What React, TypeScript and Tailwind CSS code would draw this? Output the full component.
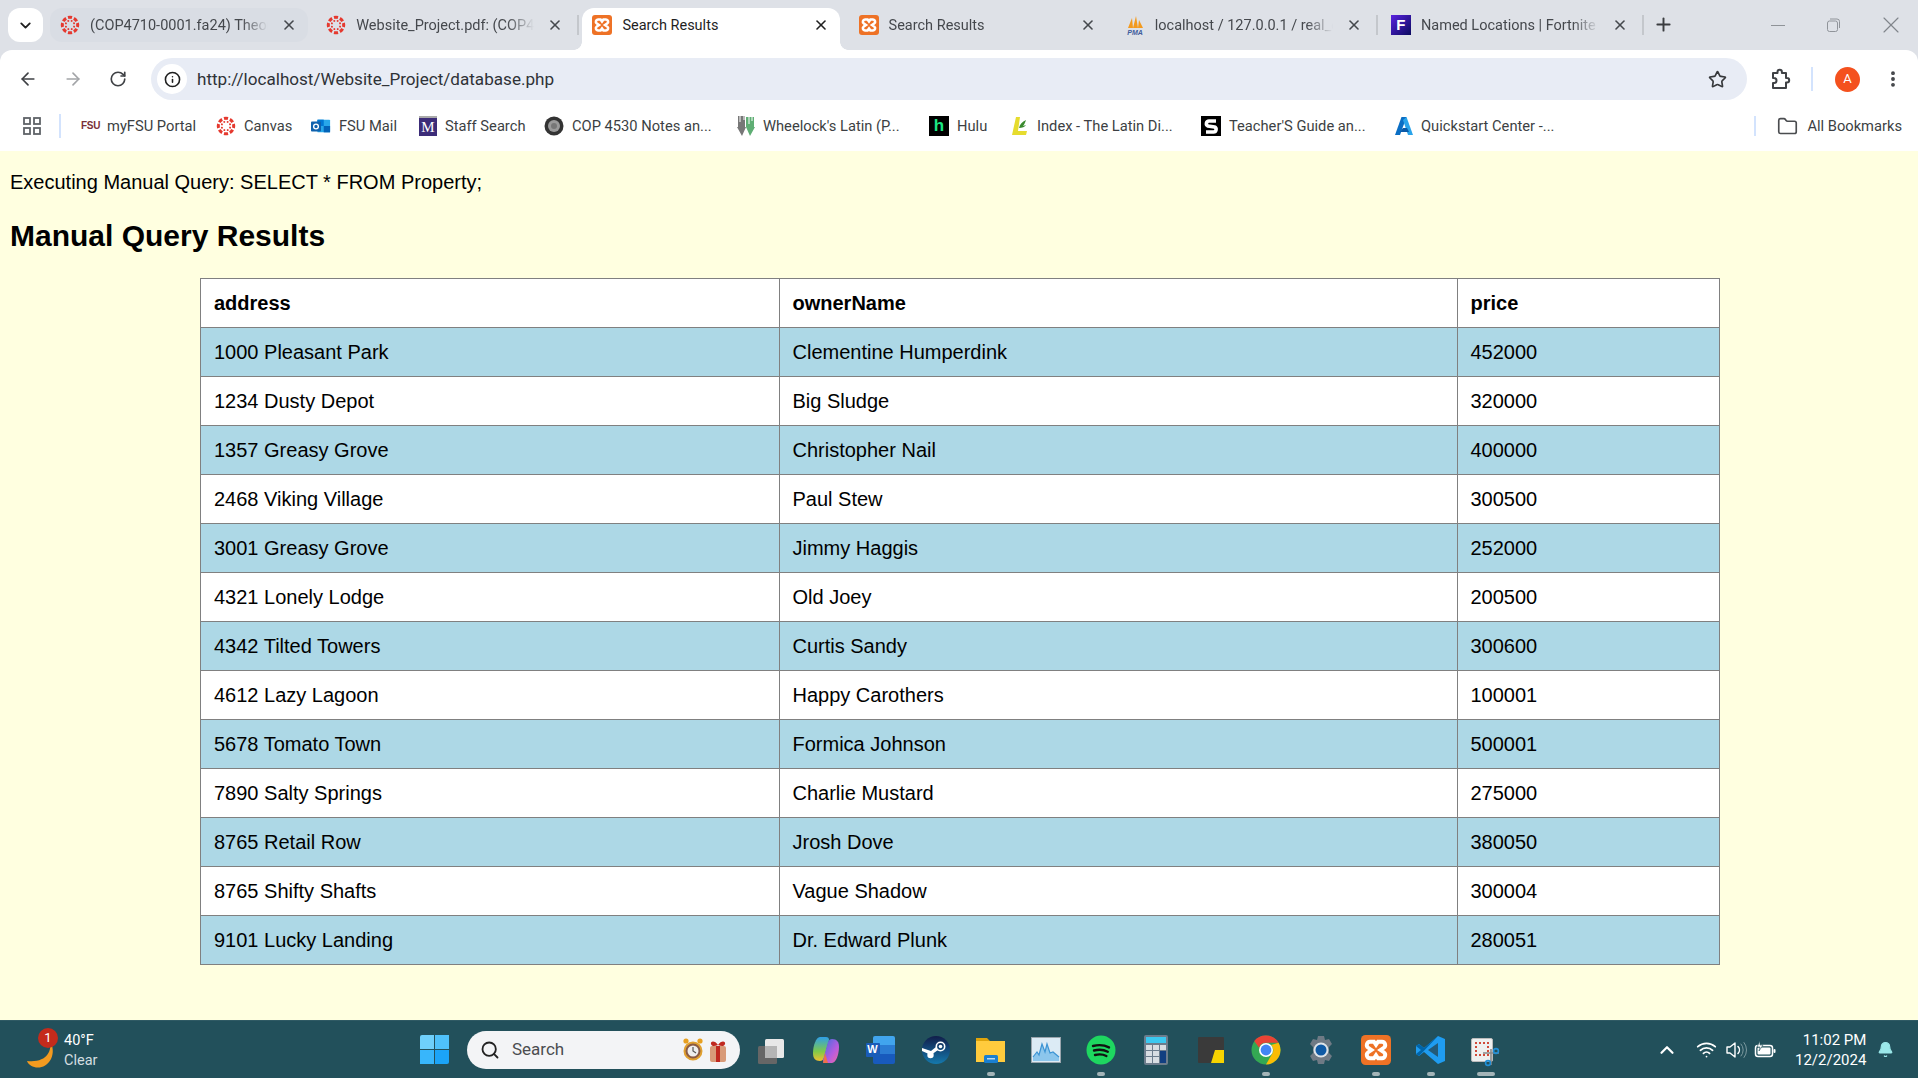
import React from "react";
import {
  ArrowLeft,
  ArrowRight,
  Bell,
  ChevronDown,
  ChevronUp,
  Folder,
  Info,
  MoreVertical,
  Plus,
  RotateCw,
  Search,
  Star,
  Wifi,
  X,
} from "lucide-react";

function CanvasIcon() {
  const big = [0, 45, 90, 135, 180, 225, 270, 315];
  return (
    <svg width="20" height="20" viewBox="0 0 20 20" className="shrink-0">
      {big.map((a) => (
        <g key={a} transform={`rotate(${a} 10 10)`}>
          <path d="M7.6 1.1a9.2 9.2 0 0 1 4.8 0L11.6 4a6.2 6.2 0 0 0-3.2 0z" fill="#e5392f" />
          <circle cx="10" cy="5.6" r="1" fill="#e5392f" transform="rotate(22 10 10)" />
        </g>
      ))}
    </svg>
  );
}

function XamppIcon({ size = 20 }: { size?: number }) {
  return (
    <svg width={size} height={size} viewBox="0 0 20 20" className="shrink-0">
      <rect width="20" height="20" rx="3" fill="#ee7226" />
      <path
        d="M6 4.5h2.6L10 6.5l1.4-2H14a2.2 2.2 0 0 1 1.2 4L13 10l2.2 1.5a2.2 2.2 0 0 1-1.2 4h-2.6l-1.4-2-1.4 2H6a2.2 2.2 0 0 1-1.2-4L7 10 4.8 8.5a2.2 2.2 0 0 1 1.2-4z"
        fill="none"
        stroke="#fff"
        strokeWidth="2.6"
      />
    </svg>
  );
}

function PmaIcon() {
  return (
    <svg width="20" height="20" viewBox="0 0 20 20" className="shrink-0">
      <path d="M3 13 7 3l1 10zM8 13l3-12 2 12zM13 13l1-8 4 8z" fill="#f39a1f" />
      <text x="10" y="19.5" textAnchor="middle" fontSize="7" fontWeight="700" fontStyle="italic" fill="#3f5d9c" fontFamily="Liberation Sans">
        PMA
      </text>
    </svg>
  );
}

function FortniteIcon() {
  return (
    <div className="w-5 h-5 shrink-0 flex items-center justify-center bg-[linear-gradient(135deg,#5a22e0,#0a0a5e)] text-white text-[15px] font-black font-['Liberation_Sans',sans-serif]">
      F
    </div>
  );
}

function FsuIcon() {
  return (
    <div className="w-[18px] shrink-0 text-[10px] leading-none font-bold text-[#7a3038] font-['Liberation_Sans',sans-serif] tracking-[-0.3px]">
      FSU
    </div>
  );
}

function OutlookIcon() {
  return (
    <svg width="20" height="20" viewBox="0 0 22 20" className="shrink-0">
      <rect x="7" y="3" width="14" height="14" rx="1" fill="#28a8ea" />
      <rect x="7" y="3" width="7" height="7" fill="#0078d4" />
      <rect x="14" y="10" width="7" height="7" fill="#0364b8" />
      <rect x="0" y="5" width="11" height="11" rx="1" fill="#0f62ad" />
      <circle cx="5.5" cy="10.5" r="2.6" fill="none" stroke="#fff" strokeWidth="1.5" />
    </svg>
  );
}

function StaffIcon() {
  return (
    <div className="w-[18px] h-5 shrink-0 flex items-end justify-center bg-[#3c2c78] text-white text-[15px] leading-[17px] font-['Liberation_Serif',serif] border-t-2 border-t-[#aaa]">
      M
    </div>
  );
}

function CopIcon() {
  return (
    <svg width="20" height="20" viewBox="0 0 20 20" className="shrink-0">
      <circle cx="10" cy="10" r="9.5" fill="#333" />
      <circle cx="10" cy="10" r="6" fill="#9a9a9a" />
      <circle cx="10" cy="10" r="3" fill="#777" />
    </svg>
  );
}

function WheelockIcon() {
  return (
    <svg width="18" height="20" viewBox="0 0 18 20" className="shrink-0">
      <path d="M1 0h7v11h1l-4 9-5-9h1z" fill="#777" />
      <path d="M9 1h8v10h1l-5 9-4-9z" fill="#5fae74" />
      <path d="M3 0v6M7 0v4M12 1v7M15 1v4" stroke="#fff" strokeWidth="1" />
    </svg>
  );
}

function HuluIcon() {
  return (
    <div className="w-5 h-5 shrink-0 bg-black flex items-center justify-center text-[#1ce783] text-[17px] leading-none font-bold font-['Liberation_Sans',sans-serif]">
      h
    </div>
  );
}

function IndexIcon() {
  return (
    <svg width="18" height="20" viewBox="0 0 18 20" className="shrink-0">
      <path d="M5 1h4l-2 14h9l-1 4H1z" fill="#e6dc2e" />
      <path d="M8 12c1-4 3-6 7-8-1 3-2 5-3 6l3-1c-1 2-4 3-7 3z" fill="#3a8a2e" />
    </svg>
  );
}

function TeacherIcon() {
  return (
    <svg width="20" height="20" viewBox="0 0 20 20" className="shrink-0">
      <rect width="20" height="20" fill="#000" />
      <path d="M15 5H8a2.6 2.6 0 0 0-1 5l6.5 1a2.6 2.6 0 0 1-1 5H5" fill="none" stroke="#fff" strokeWidth="3.6" />
    </svg>
  );
}

function AzureIcon() {
  return (
    <svg width="18" height="20" viewBox="0 0 18 20" className="shrink-0">
      <path d="M6.5 1h5L5 19H0z" fill="#0a6ec4" />
      <path d="M11.5 1 18 19h-5L8 4z" fill="#2aa4ea" />
      <path d="M8 12h4l2 4H5z" fill="#0a5aa8" />
    </svg>
  );
}

const tabs = [
  { title: "(COP4710-0001.fa24) Theory of Databases", icon: <CanvasIcon />, bg: "bg-[#d9dde4]" },
  { title: "Website_Project.pdf: (COP4710-0001)", icon: <CanvasIcon />, sep: true },
  { title: "Search Results", icon: <XamppIcon />, active: true },
  { title: "Search Results", icon: <XamppIcon /> },
  { title: "localhost / 127.0.0.1 / real_estate", icon: <PmaIcon />, sep: true },
  { title: "Named Locations | Fortnite Wiki", icon: <FortniteIcon />, sep: true },
];

const bookmarks = [
  { name: "myFSU Portal", icon: <FsuIcon />, w: "w-[135px]" },
  { name: "Canvas", icon: <CanvasIcon />, w: "w-[95px]" },
  { name: "FSU Mail", icon: <OutlookIcon />, w: "w-[108px]" },
  { name: "Staff Search", icon: <StaffIcon />, w: "w-[125px]" },
  { name: "COP 4530 Notes an...", icon: <CopIcon />, w: "w-[193px]" },
  { name: "Wheelock's Latin (P...", icon: <WheelockIcon />, w: "w-[192px]" },
  { name: "Hulu", icon: <HuluIcon />, w: "w-[82px]" },
  { name: "Index - The Latin Di...", icon: <IndexIcon />, w: "w-[190px]" },
  { name: "Teacher'S Guide an...", icon: <TeacherIcon />, w: "w-[194px]" },
  { name: "Quickstart Center -...", icon: <AzureIcon />, w: "w-[170px]" },
];

const rows = [
  ["1000 Pleasant Park", "Clementine Humperdink", "452000"],
  ["1234 Dusty Depot", "Big Sludge", "320000"],
  ["1357 Greasy Grove", "Christopher Nail", "400000"],
  ["2468 Viking Village", "Paul Stew", "300500"],
  ["3001 Greasy Grove", "Jimmy Haggis", "252000"],
  ["4321 Lonely Lodge", "Old Joey", "200500"],
  ["4342 Tilted Towers", "Curtis Sandy", "300600"],
  ["4612 Lazy Lagoon", "Happy Carothers", "100001"],
  ["5678 Tomato Town", "Formica Johnson", "500001"],
  ["7890 Salty Springs", "Charlie Mustard", "275000"],
  ["8765 Retail Row", "Jrosh Dove", "380050"],
  ["8765 Shifty Shafts", "Vague Shadow", "300004"],
  ["9101 Lucky Landing", "Dr. Edward Plunk", "280051"],
];

const taskIcons: { icon: React.ReactNode; dot?: string }[] = [
  {
    icon: (
      <svg width="30" height="30" viewBox="0 0 30 30">
        <rect x="9" y="4" width="19" height="19" rx="1.5" fill="#e8e8e8" />
        <rect x="2" y="11" width="19" height="18" rx="1.5" fill="#666" />
        <rect x="9" y="11" width="12" height="12" fill="#b5b5b5" />
      </svg>
    ),
  },
  {
    icon: (
      <svg width="30" height="30" viewBox="0 0 30 30">
        <defs>
          <linearGradient id="cpA" x1="0" y1="0" x2="0" y2="1">
            <stop offset="0" stopColor="#2f9fe8" />
            <stop offset="0.6" stopColor="#7fc94a" />
            <stop offset="1" stopColor="#f0c030" />
          </linearGradient>
          <linearGradient id="cpB" x1="0" y1="0" x2="1" y2="1">
            <stop offset="0" stopColor="#3a6fe0" />
            <stop offset="0.6" stopColor="#b65ce0" />
            <stop offset="1" stopColor="#f06aa0" />
          </linearGradient>
        </defs>
        <path d="M9 2h6c2 0 3 1 3 3l-5 18c-1 2-2 3-4 3-5 0-7-3-7-8 0-7 3-16 7-16z" fill="url(#cpA)" />
        <path d="M21 28h-6c-2 0-3-1-3-3l5-18c1-2 2-3 4-3 5 0 7 3 7 8 0 7-3 16-7 16z" fill="url(#cpB)" />
        <path d="M14 18l3 10h-5z" fill="#f0704a" />
      </svg>
    ),
  },
  {
    icon: (
      <div className="relative w-[30px] h-7">
        <div className="absolute left-[7px] top-0 w-[22px] h-7 rounded-[2px] bg-[linear-gradient(#41a5ee_33%,#2b7cd3_33%,#2b7cd3_66%,#185abd_66%)]" />
        <div className="absolute left-0 top-[7px] w-[14px] h-[14px] bg-[#1a5cb8] rounded-[1px] flex items-center justify-center text-white text-[11px] font-bold font-['Liberation_Sans',sans-serif]">
          W
        </div>
      </div>
    ),
  },
  {
    icon: (
      <svg width="30" height="30" viewBox="0 0 30 30">
        <defs>
          <linearGradient id="stm" x1="0" y1="0" x2="0" y2="1">
            <stop offset="0" stopColor="#111d4a" />
            <stop offset="1" stopColor="#1579ad" />
          </linearGradient>
        </defs>
        <circle cx="15" cy="15" r="14" fill="url(#stm)" />
        <circle cx="19.5" cy="11.5" r="4.2" fill="none" stroke="#fff" strokeWidth="1.6" />
        <circle cx="19.5" cy="11.5" r="1.8" fill="#fff" />
        <path d="M1 16l9 4 7-5-2-3-5 4-9-3z" fill="#fff" />
        <circle cx="9.5" cy="20" r="3.2" fill="#fff" />
      </svg>
    ),
  },
  {
    icon: (
      <svg width="30" height="30" viewBox="0 0 30 30">
        <path d="M0 3h11l3 3h15v4H0z" fill="#dfa40b" />
        <path d="M0 6h29v21H0z" fill="#ffcb3d" />
        <rect x="8" y="20" width="14" height="8" rx="1.5" fill="#1a7fd0" />
        <rect x="11" y="23" width="8" height="1.5" fill="#fff" opacity="0.7" />
      </svg>
    ),
    dot: "w-2",
  },
  {
    icon: (
      <svg width="30" height="26" viewBox="0 0 30 26">
        <rect x="0.5" y="0.5" width="29" height="25" fill="#dcebf5" stroke="#9aa5ad" />
        <path d="M2 20l4-5 2 3 3-11 3 8 2-8 3 9 3-1 6 5v4H2z" fill="#8cc6ec" />
        <path d="M2 20l4-5 2 3 3-11 3 8 2-8 3 9 3-1 6 5" fill="none" stroke="#3c94d4" strokeWidth="1.2" />
      </svg>
    ),
  },
  {
    icon: (
      <svg width="30" height="30" viewBox="0 0 30 30">
        <circle cx="15" cy="15" r="14.5" fill="#1ed760" />
        <path d="M7 11c6-1.6 11-1.2 16 1.4M8 15.5c5-1.3 9.5-1 13.8 1.2M9 20c4-1 8-.8 11.4 1" fill="none" stroke="#111" strokeWidth="2.4" strokeLinecap="round" />
      </svg>
    ),
    dot: "w-2",
  },
  {
    icon: (
      <div className="w-6 h-[30px] rounded-[2px] bg-[#6c7c8c] p-[2px] flex flex-col gap-[2px]">
        <div className="h-[6px] bg-[#3bc8f0]" />
        <div className="grid grid-cols-3 gap-[1px] flex-1">
          <div className="bg-[#d8dde2]" />
          <div className="bg-[#d8dde2]" />
          <div className="bg-[#d8dde2]" />
          <div className="bg-[#d8dde2]" />
          <div className="bg-[#d8dde2]" />
          <div className="bg-[#123f80] row-span-2" />
          <div className="bg-[#d8dde2]" />
          <div className="bg-[#d8dde2]" />
        </div>
      </div>
    ),
  },
  {
    icon: (
      <svg width="26" height="26" viewBox="0 0 26 26">
        <rect width="26" height="26" rx="1" fill="#3a3a3a" />
        <path d="M26 13v13H13l4-13z" fill="#f7d300" />
      </svg>
    ),
  },
  {
    icon: (
      <svg width="30" height="30" viewBox="0 0 30 30">
        <circle cx="15" cy="15" r="14.5" fill="#34a853" />
        <path d="M15 .5a14.5 14.5 0 0 1 12.6 7.3H15a7.2 7.2 0 0 0-6.9 5L3.2 6A14.5 14.5 0 0 1 15 .5z" fill="#ea4335" />
        <path d="M27.6 7.8A14.5 14.5 0 0 1 15 29.5l6.2-10.8A7.2 7.2 0 0 0 20 10z" fill="#fbbc05" />
        <circle cx="15" cy="15" r="7" fill="#fff" />
        <circle cx="15" cy="15" r="5.4" fill="#4285f4" />
      </svg>
    ),
    dot: "w-2",
  },
  {
    icon: (
      <svg width="30" height="30" viewBox="0 0 30 30">
        <path d="M12 1h6l1 4 4-1 3 5-3 3v6l3 3-3 5-4-1-1 4h-6l-1-4-4 1-3-5 3-3v-6L4 9l3-5 4 1z" fill="#6f7a85" />
        <circle cx="15" cy="15" r="7.5" fill="#dde3e8" />
        <circle cx="15" cy="15" r="5.5" fill="#0f5aa5" />
      </svg>
    ),
  },
  { icon: <XamppIcon size={30} />, dot: "w-2" },
  {
    icon: (
      <svg width="30" height="30" viewBox="0 0 30 30">
        <path d="M22 1l7 3v22l-7 3L8 17l-5 4-3-2v-8l3-2 5 4z" fill="#1f9cf0" />
        <path d="M22 8 12 15l10 7z" fill="#235a78" />
        <path d="M22 1 8 13 3 9l-3 2 5 4-5 4 3 2L22 1z" fill="#0065a9" />
      </svg>
    ),
    dot: "w-2",
  },
  {
    icon: (
      <div className="relative w-[30px] h-[30px]">
        <div className="absolute left-0 top-[3px] w-[22px] h-[24px] rounded-[2px] bg-[#eef0f0] border border-[#bbb]" />
        <div className="absolute left-[4px] top-[7px] w-[14px] h-[14px] border-2 border-dotted border-[#d04a3a]" />
        <svg width="18" height="20" viewBox="0 0 18 20" className="absolute left-[11px] top-[12px]">
          <path d="M1 6l16 0M9 2v16" stroke="#888" strokeWidth="1.6" />
          <circle cx="14" cy="4" r="2.4" fill="none" stroke="#1f8fd8" strokeWidth="1.6" />
          <circle cx="6" cy="16" r="2.4" fill="none" stroke="#1f8fd8" strokeWidth="1.6" />
        </svg>
      </div>
    ),
    dot: "w-[18px]",
  },
];

export default function App() {
  return (
    <div className="w-[1918px] h-[1078px] overflow-hidden flex flex-col bg-[#dee1e7] font-['Roboto',sans-serif]">
      {/* tab strip */}
      <div className="h-[50px] shrink-0 flex items-start pt-[8px] pl-[8px] text-[14.5px] text-[#45484d]">
        <div className="w-[35px] h-[34px] bg-white rounded-xl flex items-center justify-center text-[#1f1f1f]">
          <ChevronDown size={17} strokeWidth={2.6} />
        </div>
        <div className="flex gap-[8.2px] ml-[7px]">
          {tabs.map((t, i) => (
            <div
              key={i}
              className={`relative w-[258px] flex items-center pl-[10px] ${
                t.active
                  ? "h-[42px] pb-[8px] bg-white rounded-t-xl text-[#1f1f1f]"
                  : `h-[34px] rounded-xl ${t.bg ?? ""}`
              }`}
            >
              {t.icon}
              <span
                className={`absolute left-[40px] w-[178px] overflow-hidden whitespace-nowrap top-[8px] leading-5 ${
                  t.active ? "" : "[mask-image:linear-gradient(to_right,black_85%,transparent)]"
                }`}
              >
                {t.title}
              </span>
              <X size={16} strokeWidth={2.4} className={`absolute left-[231px] top-[9px] ${t.active ? "text-[#1f1f1f]" : "text-[#45484d]"}`} />
              {t.sep && <div className="absolute -right-[5px] top-[7px] w-[2px] h-5 bg-[#c4c7cc]" />}
              {t.active && (
                <>
                  <div className="absolute -left-2 bottom-0 w-2 h-2 bg-[radial-gradient(circle_at_0_0,#dee1e7_7.5px,#ffffff_8px)]" />
                  <div className="absolute -right-2 bottom-0 w-2 h-2 bg-[radial-gradient(circle_at_100%_0,#dee1e7_7.5px,#ffffff_8px)]" />
                </>
              )}
            </div>
          ))}
        </div>
        <Plus size={21} strokeWidth={2.2} className="ml-[14px] mt-[6px] text-[#3b3d40]" />
        <div className="ml-auto flex items-center h-[34px] text-[#80858b]">
          <div className="w-[14px] h-[1px] bg-[#8f9398]" />
          <svg width="16" height="16" viewBox="0 0 16 16" className="ml-[40px]" fill="none" stroke="#90949a" strokeWidth="1">
            <rect x="2.5" y="4" width="10" height="10.5" rx="2" />
            <path d="M5 2h7a2.5 2.5 0 0 1 2.5 2.5V11" />
          </svg>
          <X size={28} strokeWidth={1} className="ml-[36px] mr-[13px]" />
        </div>
      </div>

      {/* toolbar */}
      <div className="h-[58px] shrink-0 bg-white rounded-t-xl flex items-start pt-[8px] text-[#3f4145]">
        <div className="w-[151px] h-[42px] flex items-center pl-[18px]">
          <ArrowLeft size={20} strokeWidth={2} />
          <ArrowRight size={20} strokeWidth={2} className="ml-[25px] text-[#a3a5a8]" />
          <RotateCw size={18} strokeWidth={2.2} className="ml-[26px]" />
        </div>
        <div className="w-[1596px] h-[42px] rounded-full bg-[#e8ecf5] flex items-center pl-[6px] pr-[20px]">
          <div className="w-[30px] h-[30px] rounded-full bg-white flex items-center justify-center text-[#1f1f1f]">
            <Info size={17} strokeWidth={2.2} />
          </div>
          <span className="ml-[10px] mt-[2px] text-[17.1px] text-[#2f3237]">http://localhost/Website_Project/database.php</span>
          <Star size={19} strokeWidth={2.1} className="ml-auto text-[#35373a]" />
        </div>
        <div className="flex-1 h-[42px] flex items-center">
          <svg width="22" height="22" viewBox="0 0 22 22" fill="none" stroke="currentColor" strokeWidth="2" strokeLinejoin="round" className="ml-[22px]">
            <path d="M4 5h4.5V4a2.2 2.2 0 0 1 4.4 0v1H17v5h1a2.2 2.2 0 0 1 0 4.4h-1V20H4v-5h1a2.5 2.5 0 0 0 0-5H4z" />
          </svg>
          <div className="ml-[20px] w-[2px] h-[24px] bg-[#d3e3fd]" />
          <div className="ml-[22px] w-[25px] h-[25px] rounded-full bg-[#f4511e] flex items-center justify-center text-white text-[13px]">A</div>
          <MoreVertical size={20} strokeWidth={2.6} className="ml-[23px]" />
        </div>
      </div>

      {/* bookmarks */}
      <div className="h-[43px] shrink-0 bg-white flex items-start text-[14.7px] text-[#3c3f43]">
        <div className="flex items-center h-[36px] w-full">
          <svg width="18" height="18" viewBox="0 0 18 18" className="ml-[23px]" fill="none" stroke="#5f6368" strokeWidth="1.8">
            <rect x="1" y="1" width="6" height="6" />
            <rect x="11" y="1" width="6" height="6" />
            <rect x="1" y="11" width="6" height="6" />
            <rect x="11" y="11" width="6" height="6" />
          </svg>
          <div className="ml-[18px] w-[2px] h-[24px] bg-[#d3e3fd]" />
          <div className="flex ml-[20px]">
            {bookmarks.map((b) => (
              <div key={b.name} className={`${b.w} flex items-center gap-2 whitespace-nowrap`}>
                {b.icon}
                <span>{b.name}</span>
              </div>
            ))}
          </div>
          <div className="ml-auto w-[2px] h-[20px] bg-[#d3e3fd]" />
          <Folder size={21} strokeWidth={1.9} className="ml-[21px] text-[#4a4c4f]" />
          <span className="ml-[9px] mr-[16px] whitespace-nowrap">All Bookmarks</span>
        </div>
      </div>

      {/* page */}
      <div className="flex-1 bg-[#ffffe0] text-black font-['Liberation_Sans',Arial,sans-serif] px-[10px] pt-[20px]">
        <p className="text-[20px] leading-[23px]">Executing Manual Query: SELECT * FROM Property;</p>
        <h2 className="text-[30px] leading-[35px] font-bold mt-[24px]">Manual Query Results</h2>
        <table className="mt-[25px] ml-[190px] w-[1520px] table-fixed border-collapse text-[20px] bg-white">
          <thead>
            <tr className="h-[49px]">
              <th className="w-[578.5px] border border-[#808080] pl-[13px] pr-[13px] pb-[1px] text-left font-bold">address</th>
              <th className="w-[678px] border border-[#808080] pl-[13px] pr-[13px] pb-[1px] text-left font-bold">ownerName</th>
              <th className="border border-[#808080] pl-[13px] pr-[13px] pb-[1px] text-left font-bold">price</th>
            </tr>
          </thead>
          <tbody>
            {rows.map((r, i) => (
              <tr key={i} className={`h-[49px] ${i % 2 === 0 ? "bg-[#add8e6]" : "bg-white"}`}>
                {r.map((c) => (
                  <td key={c} className="border border-[#808080] px-[13px] pb-[1px]">
                    {c}
                  </td>
                ))}
              </tr>
            ))}
          </tbody>
        </table>
      </div>

      {/* taskbar */}
      <div className="h-[58px] shrink-0 bg-[#22505b] border-t border-t-[#2f5a64] flex items-center text-white">
        <div className="relative w-[420px] h-full">
          <svg width="30" height="34" viewBox="0 0 30 34" className="absolute left-[26px] top-[18px]">
            <path d="M24 2c2 10-3 22-23 20 3 8 18 10 24-2 3-6 2-13-1-18z" fill="#f39a1f" />
          </svg>
          <div className="absolute left-[38px] top-[7px] w-5 h-5 rounded-full bg-[#c42b1c] flex items-center justify-center text-[13px]">1</div>
          <div className="absolute left-[64px] top-[10px] text-[14.5px] leading-[20px]">
            <div>40°F</div>
            <div className="text-[#d4dee0]">Clear</div>
          </div>
        </div>
        <div className="w-[29px] h-[29px] grid grid-cols-2 grid-rows-2 gap-[1px]">
          <div className="bg-[#6fd0fb] rounded-tl-[2px]" />
          <div className="bg-[#4fc1fa]" />
          <div className="bg-[#38b6fb]" />
          <div className="bg-[#1ba4f8] rounded-br-[2px]" />
        </div>
        <div className="ml-[18px] w-[273px] h-[38px] rounded-full bg-[#f3f4f6] flex items-center pl-[13px] text-[#4b4d50]">
          <Search size={20} strokeWidth={2.2} className="text-[#222]" />
          <span className="ml-[12px] text-[17px]">Search</span>
          <svg width="46" height="26" viewBox="0 0 46 26" className="ml-auto mr-[12px]">
            <circle cx="11" cy="14" r="8.5" fill="#8a5a44" stroke="#e0a030" strokeWidth="2" />
            <circle cx="11" cy="14" r="5.5" fill="#eee" />
            <path d="M11 10v4l3 2" stroke="#555" strokeWidth="1.2" fill="none" />
            <circle cx="4" cy="4" r="2.6" fill="#e8a020" />
            <circle cx="18" cy="4" r="2.6" fill="#e8a020" />
            <rect x="28" y="9" width="16" height="16" rx="2" fill="#d89a78" />
            <rect x="34" y="9" width="4" height="16" fill="#c0281f" />
            <path d="M36 8c-3-5-8-4-7-1s4 2 7 1c3 1 6 2 7-1s-4-4-7 1z" fill="#c0281f" />
          </svg>
        </div>
        <div className="ml-[3px] flex">
          {taskIcons.map((t, i) => (
            <div key={i} className="relative w-[55px] h-[57px] flex items-center justify-center">
              {t.icon}
              {t.dot && <div className={`absolute bottom-[2px] left-1/2 -translate-x-1/2 ${t.dot} h-1 rounded-full bg-[#a3b4b8]`} />}
            </div>
          ))}
        </div>
        <div className="flex-1 flex items-center">
          <ChevronUp size={22} strokeWidth={2.4} className="ml-[143px]" />
          <Wifi size={21} strokeWidth={2} className="ml-[18px]" />
          <svg width="22" height="20" viewBox="0 0 22 20" fill="none" className="ml-[8px]">
            <path d="M2 7h3l5-4v14l-5-4H2z" stroke="#fff" strokeWidth="1.4" strokeLinejoin="round" />
            <path d="M13 6.5a5 5 0 0 1 0 7" stroke="#fff" strokeWidth="1.5" strokeLinecap="round" />
            <path d="M16 4a9 9 0 0 1 0 12M19 2.5a12 12 0 0 1 0 15" stroke="#7d9aa0" strokeWidth="1" strokeLinecap="round" />
          </svg>
          <svg width="22" height="18" viewBox="0 0 22 18" className="ml-[7px]" fill="none">
            <rect x="1.5" y="4.5" width="17" height="11" rx="2.5" stroke="#fff" strokeWidth="1.5" />
            <rect x="3.5" y="6.5" width="13" height="7" rx="1" fill="#fff" />
            <rect x="19.5" y="8" width="2" height="4" rx="1" fill="#fff" />
            <path d="M6 0 3 6h3l-1 4 4-6H6z" fill="#fff" stroke="#22505b" strokeWidth="0.6" />
          </svg>
          <div className="ml-[19px] text-right text-[15px] leading-[20px] whitespace-nowrap">
            <div>11:02 PM</div>
            <div>12/2/2024</div>
          </div>
          <Bell size={17} fill="#9be8ea" strokeWidth={1.5} className="ml-[11px] text-[#9be8ea]" />
        </div>
      </div>
    </div>
  );
}
